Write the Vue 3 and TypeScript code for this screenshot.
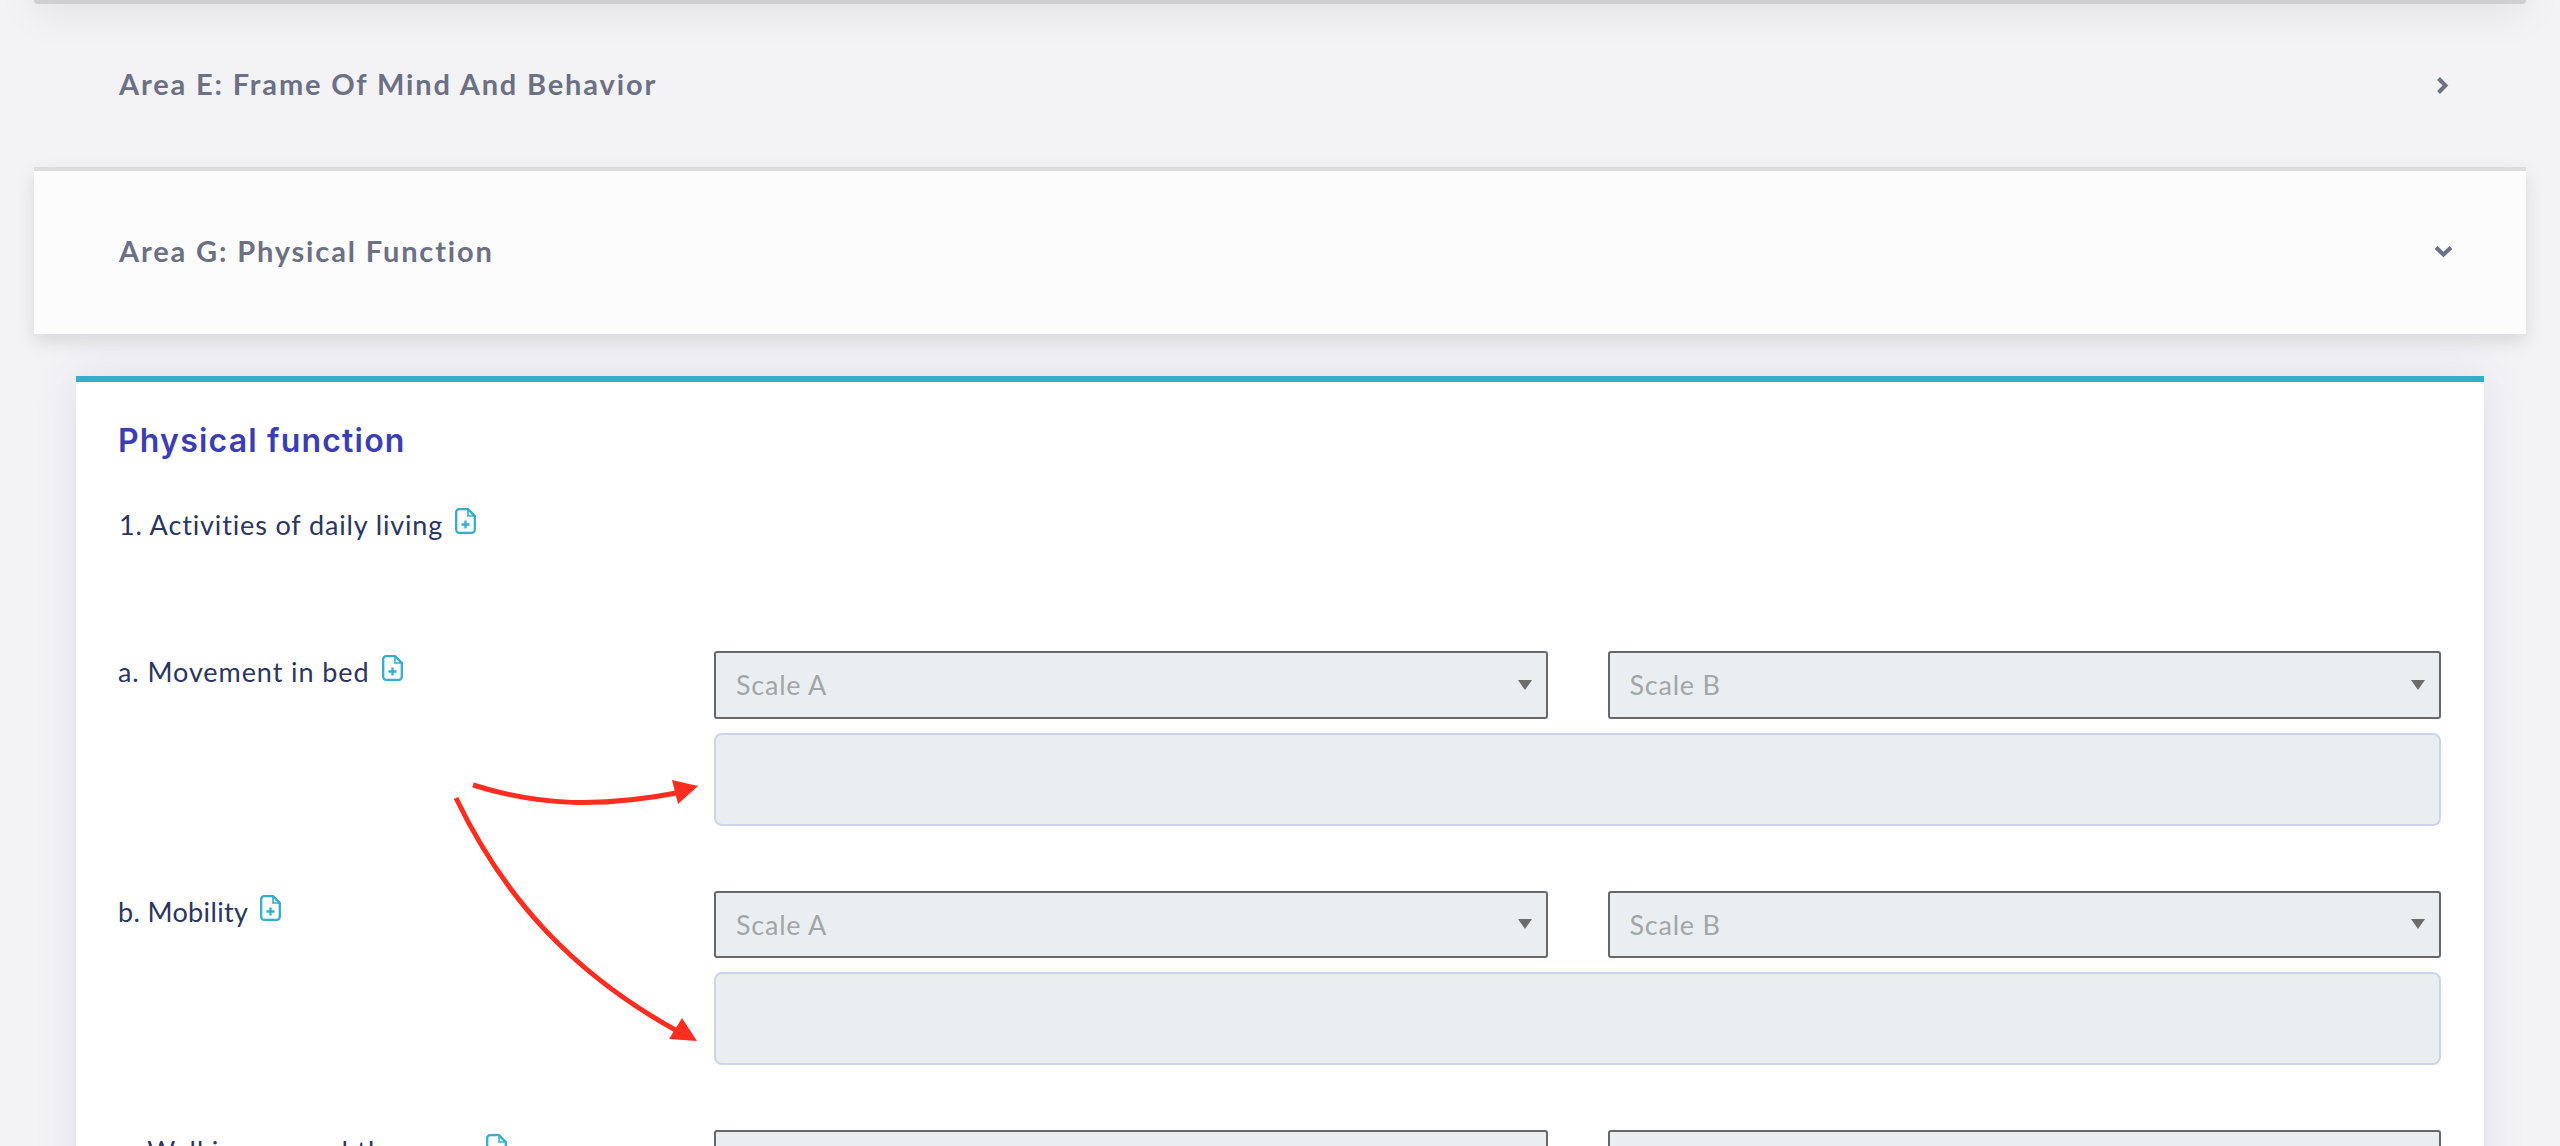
<script setup lang="ts">
interface Row { label: string; spacing: number }
const rows: Row[] = [
  { label: 'a. Movement in bed', spacing: 0.92 },
  { label: 'b. Mobility', spacing: 0.35 },
  { label: 'c. Walking around the room', spacing: 1.15 },
]
</script>

<template>
  <div class="page">
    <div class="top-edge"></div>

    <div class="acc-head closed">
      <span class="acc-title">Area E: Frame Of Mind And Behavior</span>
      <svg class="chev-r" width="13" height="19" viewBox="0 0 13 19">
        <path d="M2.5 2.5 L9.5 9.5 L2.5 16.5" fill="none" stroke="#6c7084" stroke-width="4" />
      </svg>
    </div>

    <div class="acc-head open">
      <span class="acc-title">Area G: Physical Function</span>
      <svg class="chev-d" width="19" height="13" viewBox="0 0 19 13">
        <path d="M2 2.5 L9.5 9.5 L17 2.5" fill="none" stroke="#6c7084" stroke-width="4" />
      </svg>
    </div>

    <section class="card">
      <h2 class="card-title">Physical function</h2>
      <div class="label intro">
        <span class="t-intro">1. Activities of daily living</span>
        <svg class="doc" width="21" height="26" viewBox="0 0 21 26">
          <path d="M4.5 1.2 H13 L19.8 8 V21.8 a3 3 0 0 1 -3 3 H4.2 a3 3 0 0 1 -3 -3 V4.5 a3 3 0 0 1 3.3 -3.3 Z" fill="none" stroke="#33aecf" stroke-width="2.3" />
          <path d="M13 1.5 V8 H19.5 Z" fill="none" stroke="#33aecf" stroke-width="1.6" />
          <path d="M10.5 12.5 V20.5 M6.5 16.5 H14.5" fill="none" stroke="#33aecf" stroke-width="2.3" />
        </svg>
      </div>

      <div v-for="row in rows" :key="row.label" class="row">
        <div class="label row-label">
          <span :style="{ letterSpacing: row.spacing + 'px' }">{{ row.label }}</span>
          <svg class="doc" width="21" height="26" viewBox="0 0 21 26">
            <path d="M4.5 1.2 H13 L19.8 8 V21.8 a3 3 0 0 1 -3 3 H4.2 a3 3 0 0 1 -3 -3 V4.5 a3 3 0 0 1 3.3 -3.3 Z" fill="none" stroke="#33aecf" stroke-width="2.3" />
            <path d="M13 1.5 V8 H19.5 Z" fill="none" stroke="#33aecf" stroke-width="1.6" />
            <path d="M10.5 12.5 V20.5 M6.5 16.5 H14.5" fill="none" stroke="#33aecf" stroke-width="2.3" />
          </svg>
        </div>
        <div class="fields">
          <div class="selects">
            <div class="select"><span>Scale A</span><i class="caret"></i></div>
            <div class="select"><span>Scale B</span><i class="caret"></i></div>
          </div>
          <div class="note"></div>
        </div>
      </div>
    </section>

    <svg class="arrows" width="2560" height="1146" viewBox="0 0 2560 1146">
      <path d="M473 785 C 540 806, 600 808, 682 792" fill="none" stroke="#ff2d20" stroke-width="5" />
      <path d="M672 780 L698 786 L678 804 Z" fill="#ff2d20" />
      <path d="M456 798 C 505 900, 575 975, 679 1032" fill="none" stroke="#ff2d20" stroke-width="5" />
      <path d="M682 1018 L697 1041 L669 1039 Z" fill="#ff2d20" />
    </svg>
  </div>
</template>

<style scoped>
.page {
  position: relative;
  width: 2560px;
  height: 1146px;
  overflow: hidden;
  background: #f3f3f6;
  font-family: "Lato", "Liberation Sans", sans-serif;
}
.top-edge {
  height: 204px;
  margin: -200px 34px 0;
  background: #cfcfcf;
  border-radius: 0 0 4px 4px;
  box-shadow: 0 10px 40px rgba(0, 0, 0, 0.07);
}
.acc-head {
  display: flex;
  align-items: center;
  justify-content: space-between;
  margin: 0 34px;
  padding: 0 73px 0 85px;
  box-sizing: border-box;
  position: relative;
}
.acc-head.closed {
  height: 163px;
}
.acc-head.open {
  height: 167px;
  background: #fcfcfc;
  border-top: 4px solid #dcdcdc;
  box-shadow: 0 8px 18px rgba(0, 0, 0, 0.11);
  z-index: 1;
}
.acc-title {
  font-size: 29px;
  font-weight: 700;
  color: #6c7084;
  line-height: 40px;
  margin-top: -3px;
  letter-spacing: 1.85px;
  white-space: nowrap;
}
.chev-r { margin-right: 4px; margin-top: -1px; }
.chev-d { margin-top: -3px; }

.card {
  margin: 42px 76px 0;
  padding: 0 43px;
  background: #fff;
  border-top: 6px solid #33aecf;
  box-shadow: 0 0 40px rgba(70, 70, 120, 0.12);
}
.card-title {
  margin: 0;
  padding-top: 37px;
  font-family: "Inter", "Lato", sans-serif;
  font-size: 32px;
  font-weight: 600;
  line-height: 44px;
  color: #3b3db5;
  letter-spacing: 1.2px;
  margin-left: -1px;
}
.label {
  display: flex;
  align-items: flex-start;
  font-size: 27px;
  line-height: 36px;
  color: #2a3560;
  white-space: nowrap;
}
.doc {
  margin-left: 12px;
  margin-top: 1px;
  flex: none;
}
.t-intro { letter-spacing: 0.86px; }
.intro {
  margin-top: 44px;
  height: 36px;
  margin-bottom: 108px;
}
.row {
  display: grid;
  grid-template-columns: 595px 1fr;
  height: 174.5px;
  margin-bottom: 65px;
}
.row-label {
  padding-top: 3px;
  margin-left: -1px;
}
.fields {
  display: flex;
  flex-direction: column;
  gap: 14px;
}
.selects {
  display: grid;
  grid-template-columns: 1fr 1fr;
  gap: 60px;
}
.select {
  box-sizing: border-box;
  height: 67.5px;
  display: flex;
  align-items: center;
  justify-content: space-between;
  padding: 0 14px 0 20px;
  background: #ebeef1;
  border: 2px solid #666869;
  border-radius: 3px;
  font-size: 27px;
  color: #a3a5a6;
  letter-spacing: 0.75px;
}
.caret {
  width: 0;
  height: 0;
  border-left: 7.5px solid transparent;
  border-right: 7.5px solid transparent;
  border-top: 10px solid #6c6c6c;
}
.note {
  box-sizing: border-box;
  height: 93px;
  background: #ebeef1;
  border: 2px solid #cdd3e8;
  border-radius: 8px;
}
.arrows {
  position: absolute;
  left: 0;
  top: 0;
  pointer-events: none;
}
</style>

<style>
body {
  background: #f3f3f6;
}
</style>
